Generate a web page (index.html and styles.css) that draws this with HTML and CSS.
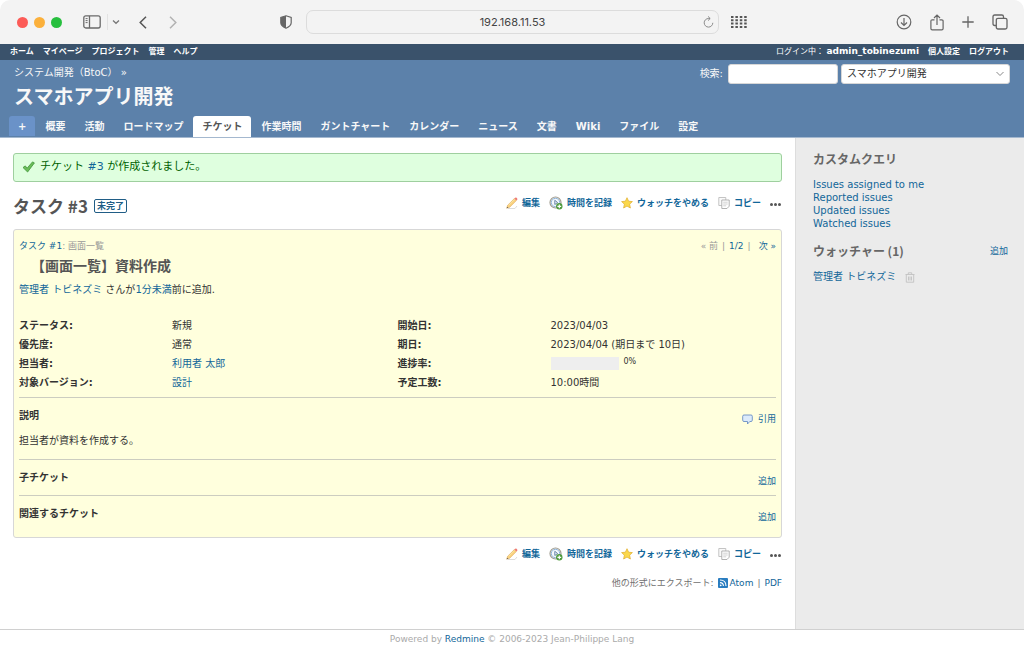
FILE: index.html
```
<!DOCTYPE html>
<html lang="ja">
<head>
    <meta charset="UTF-8">
    <meta name="viewport" content="width=device-width, initial-scale=1.0">
    <title>タスク #3: 【画面一覧】資料作成 - スマホアプリ開発 - Redmine</title>
    <link rel="stylesheet" href="styles.css">
</head>
<body>
    <!-- Shared icons -->
    <svg class="sprites" aria-hidden="true">
        <symbol id="icon-edit" viewBox="0 0 12 12">
            <path d="M2 11.5h7L11 9" fill="none" stroke="#dcdcdc"/>
            <path d="M.7 11.2l1-3L8.300 1.600l2 2L3.700 10.200z" fill="#f9d27e" stroke="#dfa95c" stroke-width=".6"/>
            <path d="M2.600 8.300L8.600 2.300" stroke="#fde7a8" stroke-width=".8"/>
            <path d="M8.300 1.600l.9-.9q.7-.5 1.400.1l.6.6q.5.700 0 1.300l-.9.900z" fill="#ee7b76"/>
            <path d="M.7 11.2l.5-1.500 1 1z" fill="#555"/>
        </symbol>
        <symbol id="icon-time" viewBox="0 0 14 14">
            <circle cx="6.500" cy="6.500" r="5.500" fill="#f4f8fc" stroke="#a19d90" stroke-width="1.200"/>
            <circle cx="6.500" cy="6.500" r="4.200" fill="none" stroke="#8fb4da" stroke-width="1"/>
            <path d="M5.800 4.300v4.200l2.800-2z" fill="none" stroke="#5b7c9f" stroke-width=".9"/>
            <circle cx="10.300" cy="10.300" r="3.200" fill="#4f9a3d"/>
            <path d="M10.300 8.400v3.800M8.400 10.300h3.800" stroke="#fff" stroke-width="1.200"/>
        </symbol>
        <symbol id="icon-fav" viewBox="0 0 12 12">
            <path d="M6 .7l1.600 3.500 3.800.4-2.800 2.600.8 3.800L6 9.100 2.600 11l.8-3.800L.6 4.600l3.800-.4z" fill="#fbd84b" stroke="#e0ac2b" stroke-width=".7"/>
        </symbol>
        <symbol id="icon-copy" viewBox="0 0 12 12">
            <path d="M.8.500h7v8h-7z" fill="#fafafa" stroke="#bdbdbd" stroke-width=".9"/>
            <path d="M3.800 3h7.400v6.200l-2.200 2.300H3.800z" fill="#fff" stroke="#aaa" stroke-width=".9"/>
            <path d="M5.200 5.200h4.500M5.200 7h4.500M5.200 8.800h3" stroke="#c6c6c6" stroke-width=".8"/>
        </symbol>
    </svg>

    <div class="browser-bar">
        <div class="window-dots">
            <span class="dot red"></span>
            <span class="dot yellow"></span>
            <span class="dot green"></span>
        </div>
        <button class="bar-btn sidebar-btn" aria-label="サイドバー">
            <svg width="18" height="14" viewBox="0 0 18 14" fill="none" stroke="#6a6a6a" stroke-width="1.300">
                <rect x=".8" y=".8" width="16.400" height="12.200" rx="2"/>
                <path d="M6.500 1v12"/>
                <path d="M2.600 3.600h2M2.600 5.600h2M2.600 7.600h2" stroke-width="1"/>
            </svg>
        </button>
        <button class="bar-btn split-btn" aria-label="タブグループ">
            <svg width="8" height="6" viewBox="0 0 8 6" fill="none" stroke="#777" stroke-width="1.300"><path d="M1 1.500l3 2.800 3-2.800"/></svg>
        </button>
        <button class="bar-btn" aria-label="戻る">
            <svg width="8" height="13" viewBox="0 0 8 13" fill="none" stroke="#555" stroke-width="1.500"><path d="M7 .8L1.200 6.500 7 12.200"/></svg>
        </button>
        <button class="bar-btn forward-btn" aria-label="進む">
            <svg width="8" height="13" viewBox="0 0 8 13" fill="none" stroke="#b2b2b2" stroke-width="1.500"><path d="M1 .8l5.800 5.700L1 12.200"/></svg>
        </button>
        <button class="bar-btn shield-btn" aria-label="プライバシー">
            <svg width="12" height="14" viewBox="0 0 12 14">
                <path d="M6 .8l5.200 1.700v5.200q0 3.200-5.200 5.500Q.8 10.900.8 7.700V2.500z" fill="none" stroke="#666" stroke-width="1.200"/>
                <path d="M6 .8v12.400Q.8 10.900.8 7.700V2.500z" fill="#666"/>
            </svg>
        </button>
        <div class="address">
            <span>192.168.11.53</span>
            <button class="reload" aria-label="再読み込み">
                <svg width="11" height="12" viewBox="0 0 11 12" fill="none" stroke="#8a8a8a" stroke-width="1"><path d="M9.800 6.800a4.300 4.300 0 1 1-4.300-4.300h1.500M5 .4l2.200 2.100L5 4.600"/></svg>
            </button>
        </div>
        <button class="bar-btn" aria-label="お気に入り">
            <svg width="16" height="12" viewBox="0 0 16 12" stroke="#555" stroke-width="2" stroke-dasharray="2.500 1.900"><path d="M0 1h16M0 4.300h16M0 7.600h16M0 10.900h16"/></svg>
        </button>
        <div class="bar-right">
            <button class="bar-btn" aria-label="ダウンロード">
                <svg width="16" height="16" viewBox="0 0 16 16" fill="none" stroke="#666" stroke-width="1.200"><circle cx="8" cy="8" r="6.800"/><path d="M8 4v7.300M5 8.500l3 3 3-3"/></svg>
            </button>
            <button class="bar-btn" aria-label="共有">
                <svg width="14" height="17" viewBox="0 0 14 17" fill="none" stroke="#666" stroke-width="1.200"><path d="M4.500 5.800H2.200Q.9 5.800.9 7v7.500q0 1.300 1.300 1.300h9.600q1.300 0 1.300-1.300V7q0-1.200-1.300-1.200H9.500M7 11V1.200M4 4l3-3 3 3"/></svg>
            </button>
            <button class="bar-btn" aria-label="新規タブ">
                <svg width="12" height="12" viewBox="0 0 12 12" stroke="#666" stroke-width="1.300"><path d="M6 .3v11.400M.3 6h11.400"/></svg>
            </button>
            <button class="bar-btn" aria-label="タブ一覧">
                <svg width="16" height="16" viewBox="0 0 16 16" fill="none" stroke="#666" stroke-width="1.300"><path d="M4 11.500H2.700q-1.700 0-1.700-1.700V2.700Q1 1 2.700 1h7.100q1.700 0 1.700 1.700V4"/><rect x="4.300" y="4.300" width="10.700" height="10.700" rx="1.700"/></svg>
            </button>
        </div>
    </div>

    <div class="top-menu">
        <nav class="top-links">
            <a href="#">ホーム</a>
            <a href="#">マイページ</a>
            <a href="#">プロジェクト</a>
            <a href="#">管理</a>
            <a href="#">ヘルプ</a>
        </nav>
        <div class="account">
            <span class="logged-as">ログイン中： <a href="#">admin_tobinezumi</a></span>
            <a href="#">個人設定</a>
            <a href="#">ログアウト</a>
        </div>
    </div>

    <header class="header">
        <div class="header-row">
            <div>
                <div class="breadcrumbs"><a href="#">システム開発（BtoC）</a> »</div>
                <h1>スマホアプリ開発</h1>
            </div>
            <form class="quick-search">
                <label for="q">検索:</label>
                <input type="text" id="q">
                <select aria-label="プロジェクト">
                    <option>スマホアプリ開発</option>
                </select>
            </form>
        </div>
        <nav class="main-menu">
            <a href="#" class="new-object">+</a>
            <a href="#">概要</a>
            <a href="#">活動</a>
            <a href="#">ロードマップ</a>
            <a href="#" class="selected">チケット</a>
            <a href="#">作業時間</a>
            <a href="#">ガントチャート</a>
            <a href="#">カレンダー</a>
            <a href="#">ニュース</a>
            <a href="#">文書</a>
            <a href="#">Wiki</a>
            <a href="#">ファイル</a>
            <a href="#">設定</a>
        </nav>
    </header>

    <div class="main">
        <main class="content">
            <div class="flash">
                <svg width="13" height="12" viewBox="0 0 13 12"><path d="M1 6.500l2.300-1.600 1.800 2.300L10.500.900l1.900 1L5.600 11z" fill="#6cbd5a" stroke="#3f9438" stroke-width=".8"/></svg>
                <span>チケット <a href="#">#3</a> が作成されました。</span>
            </div>

            <div class="title-row">
                <h2>タスク #3</h2>
                <span class="badge">未完了</span>
                <div class="actions">
                    <a href="#"><svg width="12" height="12"><use href="#icon-edit"/></svg>編集</a>
                    <a href="#"><svg width="14" height="14"><use href="#icon-time"/></svg>時間を記録</a>
                    <a href="#"><svg width="12" height="12"><use href="#icon-fav"/></svg>ウォッチをやめる</a>
                    <a href="#"><svg width="12" height="12"><use href="#icon-copy"/></svg>コピー</a>
                    <button class="more" aria-label="操作"><i></i><i></i><i></i></button>
                </div>
            </div>

            <div class="issue">
                <div class="issue-top">
                    <div><a href="#">タスク #1</a>: 画面一覧</div>
                    <div class="next-prev"><span>« 前</span><span>|</span><a href="#">1/2</a><span>|</span><a href="#" class="next">次 »</a></div>
                </div>
                <h3>【画面一覧】資料作成</h3>
                <p class="author"><a href="#">管理者 トビネズミ</a> さんが<a href="#">1分未満</a>前に追加.</p>

                <div class="attributes">
                    <dl>
                        <dt>ステータス:</dt><dd>新規</dd>
                        <dt>優先度:</dt><dd>通常</dd>
                        <dt>担当者:</dt><dd><a href="#">利用者 太郎</a></dd>
                        <dt>対象バージョン:</dt><dd><a href="#">設計</a></dd>
                    </dl>
                    <dl>
                        <dt>開始日:</dt><dd>2023/04/03</dd>
                        <dt>期日:</dt><dd>2023/04/04 (期日まで 10日)</dd>
                        <dt>進捗率:</dt><dd class="done"><span class="progress"></span><span class="percent">0%</span></dd>
                        <dt>予定工数:</dt><dd>10:00時間</dd>
                    </dl>
                </div>

                <section>
                    <div class="section-head">
                        <h4>説明</h4>
                        <a href="#"><svg width="11" height="11" viewBox="0 0 11 11"><path d="M2 1h7q1.300 0 1.300 1.300v3.900Q10.300 7.500 9 7.500H7.800L5.500 10V7.500H2Q.7 7.500.7 6.200V2.300Q.7 1 2 1z" fill="#dcebfb" stroke="#6b8fc4" stroke-width=".9"/></svg>引用</a>
                    </div>
                    <p>担当者が資料を作成する。</p>
                </section>
                <section>
                    <div class="section-head">
                        <h4>子チケット</h4>
                        <a href="#">追加</a>
                    </div>
                </section>
                <section>
                    <div class="section-head">
                        <h4>関連するチケット</h4>
                        <a href="#">追加</a>
                    </div>
                </section>
            </div>

            <div class="actions bottom-actions">
                <a href="#"><svg width="12" height="12"><use href="#icon-edit"/></svg>編集</a>
                <a href="#"><svg width="14" height="14"><use href="#icon-time"/></svg>時間を記録</a>
                <a href="#"><svg width="12" height="12"><use href="#icon-fav"/></svg>ウォッチをやめる</a>
                <a href="#"><svg width="12" height="12"><use href="#icon-copy"/></svg>コピー</a>
                <button class="more" aria-label="操作"><i></i><i></i><i></i></button>
            </div>

            <div class="other-formats">
                <span>他の形式にエクスポート:</span>
                <a href="#" class="atom"><svg width="10" height="10" viewBox="0 0 10 10"><rect width="10" height="10" rx="1" fill="#2a7dc0"/><g fill="none" stroke="#fff" stroke-width="1.100"><path d="M2 2q6 0 6 6M2 4.600q3.400 0 3.400 3.400"/></g><circle cx="2.700" cy="7.300" r=".9" fill="#fff"/></svg>Atom</a>
                <span>|</span>
                <a href="#">PDF</a>
            </div>
        </main>

        <aside class="sidebar">
            <h3>カスタムクエリ</h3>
            <ul>
                <li><a href="#">Issues assigned to me</a></li>
                <li><a href="#">Reported issues</a></li>
                <li><a href="#">Updated issues</a></li>
                <li><a href="#">Watched issues</a></li>
            </ul>
            <div class="watchers-head">
                <h3>ウォッチャー (1)</h3>
                <a href="#">追加</a>
            </div>
            <div class="watcher">
                <a href="#">管理者 トビネズミ</a>
                <button aria-label="削除">
                    <svg width="10" height="11" viewBox="0 0 10 11" fill="none" stroke="#c2c2c2" stroke-width=".9"><path d="M.5 2.500h9M3.300 2.300V.8h3.400v1.500M1.300 2.700v7.500h7.400V2.700M3.500 4.500v4M5 4.500v4M6.500 4.500v4"/></svg>
                </button>
            </div>
        </aside>
    </div>

    <footer>Powered by <a href="#">Redmine</a> © 2006-2023 Jean-Philippe Lang</footer>
</body>
</html>
```

FILE: styles.css
```
* {
    box-sizing: border-box;
}

body {
    margin: 0;
    min-height: 100vh;
    display: flex;
    flex-direction: column;
    background: #fff;
    color: #333;
    font-family: "DejaVu Sans", "Noto Sans CJK JP", sans-serif;
    font-size: 10px;
    line-height: 16px;
}

a {
    color: #169;
    text-decoration: none;
}

a:hover {
    text-decoration: underline;
}

h1, h2, h3, h4, p, ul, dl, dd {
    margin: 0;
    padding: 0;
}

h1, h2, h3, h4 {
    font-family: "Noto Sans CJK JP", sans-serif;
}

button {
    padding: 0;
    border: 0;
    background: none;
    cursor: pointer;
}

svg {
    display: block;
    flex: none;
}

.sprites {
    position: absolute;
    width: 0;
    height: 0;
}

/* Browser bar */
.browser-bar {
    display: flex;
    align-items: center;
    height: 44px;
    padding: 0 16px 0 17px;
    background: #f3f3f3;
    border-radius: 10px 10px 0 0;
}

.window-dots {
    display: flex;
    gap: 6px;
}

.dot {
    width: 11px;
    height: 11px;
    border-radius: 50%;
}

.red {
    background: #fc5b57;
}

.yellow {
    background: #fbb03b;
}

.green {
    background: #27bf3e;
}

.sidebar-btn {
    margin-left: 21px;
}

.split-btn {
    height: 16px;
    margin: 0 19px 0 6px;
    padding-left: 4px;
    border-left: 1px solid #e2e2e2;
}

.forward-btn {
    margin-left: 22px;
}

.shield-btn {
    margin: 0 14px 0 103px;
}

.address {
    flex: 1;
    display: flex;
    align-items: center;
    height: 24px;
    margin-right: 12px;
    padding: 0 4px;
    border: 1px solid #dcdcdc;
    border-radius: 7px;
    color: #444;
    font: 11px/22px Inter, sans-serif;
}

.address span {
    flex: 1;
    padding-left: 11px;
    text-align: center;
}

.bar-right {
    display: flex;
    align-items: center;
    gap: 18px;
    margin-left: 149px;
}

/* Top menu */
.top-menu {
    display: flex;
    justify-content: space-between;
    height: 16px;
    padding: 0 15px 0 10px;
    background: #3a526b;
    color: #fff;
    font-size: 8px;
    line-height: 15px;
}

.top-menu a {
    color: #fff;
    font-weight: bold;
}

.top-links,
.account {
    display: flex;
    gap: 9px;
}

.top-menu .logged-as a {
    font-size: 9px;
}

/* Header */
.header {
    padding: 4px 14px 0 9px;
    background: #5c81aa;
    border-bottom: 1px solid #a4b8cf;
    color: #f8f8f8;
}

.header a {
    color: #f8f8f8;
}

.header-row {
    display: flex;
    justify-content: space-between;
    height: 52px;
    padding-left: 5px;
}

.breadcrumbs {
    line-height: 18px;
}

.header h1 {
    font-size: 20px;
    line-height: 28px;
}

.quick-search {
    display: flex;
    align-items: center;
    height: 20px;
}

.quick-search label {
    margin-right: 5px;
}

.quick-search input,
.quick-search select {
    height: 20px;
    border: 1px solid #d7d7d7;
    border-radius: 3px;
    background: #fff;
    color: #333;
    font: inherit;
}

.quick-search input {
    width: 110px;
    margin-right: 3px;
}

.quick-search select {
    width: 169px;
    padding: 0 5px;
    appearance: none;
    background-image: url("data:image/svg+xml,%3Csvg xmlns='http://www.w3.org/2000/svg' width='8' height='6' fill='none' stroke='%23888'%3E%3Cpath d='M.5 1l3.500 3.500L7.500 1'/%3E%3C/svg%3E");
    background-repeat: no-repeat;
    background-position: right 5px center;
}

.main-menu {
    display: flex;
    gap: 1px;
}

.main-menu a {
    height: 21px;
    padding: 0 9px;
    border-radius: 3px 3px 0 0;
    font-weight: bold;
    line-height: 21px;
}

.main-menu .new-object {
    height: 20px;
    background: #6a92c8;
}

.main-menu .selected {
    background: #fff;
    color: #555;
}

/* Main area */
.main {
    flex: 1;
    display: flex;
}

.content {
    flex: 1;
    padding: 15px 13px 10px;
}

.flash {
    display: flex;
    align-items: center;
    gap: 5px;
    height: 29px;
    padding: 0 8px 2px;
    border: 1px solid #9fcf9f;
    border-radius: 3px;
    background: #dfffdf;
    color: #005f00;
    font-size: 11px;
}

.title-row {
    display: flex;
    align-items: center;
    gap: 6px;
    height: 47px;
    color: #555;
}

h2 {
    font-size: 17px;
}

.badge {
    padding: 0 2px;
    border: 1px solid #205d86;
    border-radius: 2px;
    color: #205d86;
    font-size: 9px;
    font-weight: bold;
    line-height: 12px;
}

.actions {
    display: flex;
    justify-content: flex-end;
    align-items: center;
    gap: 9px;
    font-size: 9px;
    font-weight: bold;
}

.title-row .actions {
    flex: 1;
    padding-bottom: 6px;
}

.actions a {
    display: flex;
    align-items: center;
    gap: 4px;
}

.more {
    display: flex;
    gap: 1px;
    padding: 3px 1px 0 0;
}

.more i {
    width: 3px;
    height: 3px;
    border-radius: 50%;
    background: #555;
}

/* Issue box */
.issue {
    padding: 8px 5px 16px;
    border: 1px solid #d7d7d7;
    border-radius: 3px;
    background: #ffffdd;
}

.issue-top {
    display: flex;
    justify-content: space-between;
    color: #999;
    font-size: 9px;
}

.next-prev {
    display: flex;
    gap: 4px;
}

.next {
    margin-left: 4px;
}

.issue h3 {
    margin-left: 12px;
    color: #555;
    font-size: 14px;
    line-height: 22px;
}

.author {
    margin: 6px 0 18px;
}

.attributes {
    display: grid;
    grid-template-columns: 1fr 1fr;
    margin-bottom: 5px;
}

.attributes dl {
    display: grid;
    grid-template-columns: 153px 1fr;
    line-height: 19px;
}

dt {
    font-weight: bold;
}

.done {
    display: flex;
    align-items: center;
    gap: 5px;
}

.progress {
    width: 68px;
    height: 13px;
    background: #eee;
}

.percent {
    padding-bottom: 4px;
    font-size: 8px;
    line-height: 15px;
}

.issue section {
    padding: 9px 0 10px;
    border-top: 1px solid #cccdc0;
}

.issue section:last-child {
    padding-bottom: 0;
}

.section-head {
    display: flex;
    justify-content: space-between;
    height: 16px;
}

.section-head h4 {
    font-size: 10px;
}

.section-head a {
    display: flex;
    align-items: center;
    gap: 5px;
    padding-top: 8px;
    font-size: 9px;
}

.issue section p {
    margin-top: 10px;
}

.bottom-actions {
    margin-top: 8px;
}

.other-formats {
    display: flex;
    justify-content: flex-end;
    gap: 4px;
    margin-top: 13px;
    color: #707070;
    font-size: 9px;
}

.atom {
    display: flex;
    align-items: center;
    gap: 2px;
}

/* Sidebar */
.sidebar {
    width: 229px;
    padding: 13px 16px 0 17px;
    border-left: 1px solid #ddd;
    background: #ebebeb;
}

.sidebar h3 {
    color: #666;
    font-size: 12px;
}

.sidebar ul {
    margin: 11px 0 13px;
    list-style: none;
    line-height: 13px;
}

.watchers-head {
    display: flex;
    justify-content: space-between;
    margin-bottom: 10px;
    font-size: 9px;
}

.watcher {
    display: flex;
    align-items: center;
    gap: 9px;
}

footer {
    height: 20px;
    border-top: 1px solid #d0d0d0;
    color: #aaa;
    font-size: 9px;
    line-height: 19px;
    text-align: center;
}
```
